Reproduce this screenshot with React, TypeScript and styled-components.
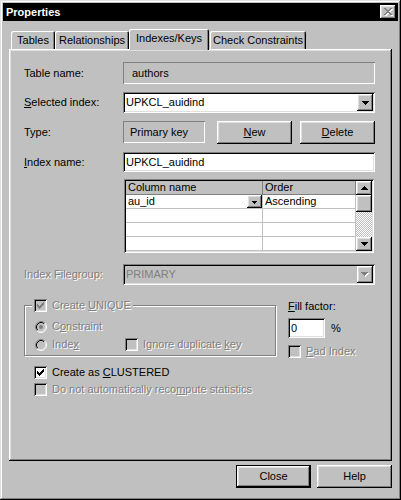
import React from "react";
import styled, { createGlobalStyle, css } from "styled-components";

const FACE = "#c0c0c0";
const LIGHT = "#dfdfdf";
const SHADOW = "#808080";

const GlobalStyle = createGlobalStyle`
  html, body { margin: 0; padding: 0; background: ${FACE}; }
  body {
    font-family: "Liberation Sans", Arial, sans-serif;
    font-size: 11px;
    line-height: 13px;
    color: #000;
  }
  *, *::before, *::after { box-sizing: border-box; }
`;

const raisedEdge = css`
  box-shadow: inset -1px -1px 0 #000, inset 1px 1px 0 #fff,
    inset -2px -2px 0 ${SHADOW}, inset 2px 2px 0 ${LIGHT};
`;
const sunkenEdge = css`
  box-shadow: inset 1px 1px 0 ${SHADOW}, inset -1px -1px 0 #fff,
    inset 2px 2px 0 #000, inset -2px -2px 0 ${LIGHT};
`;
const disabledText = css`
  color: ${SHADOW};
  text-shadow: 1px 1px 0 #fff;
`;

/* ---------- pixel glyphs ---------- */
const pix = (rows: string[]) =>
  rows
    .map((r, y) =>
      r
        .split("")
        .map((c, x) => (c === "#" ? `M${x} ${y}h1v1h-1z` : ""))
        .join("")
    )
    .join("");

const CLOSE_X = [
  "##....##",
  ".##..##.",
  "..####..",
  "...##...",
  "..####..",
  ".##..##.",
  "##....##",
];
const DOWN = ["#######", ".#####.", "..###..", "...#..."];
const DOWN_SMALL = ["#####", ".###.", "..#.."];
const UP = ["...#...", "..###..", ".#####.", "#######"];
const CHECK = [
  "......#",
  ".....##",
  "#...###",
  "##.###.",
  "#####..",
  ".###...",
  "..#....",
];

const GlyphSvg = styled.svg`
  display: block;
  flex: none;
`;

const Glyph: React.FC<{ rows: string[]; color: string; embossed?: boolean }> = ({
  rows,
  color,
  embossed,
}) => {
  const w = rows[0].length + (embossed ? 1 : 0);
  const h = rows.length + (embossed ? 1 : 0);
  const d = pix(rows);
  return (
    <GlyphSvg width={w} height={h} viewBox={`0 0 ${w} ${h}`} shapeRendering="crispEdges">
      {embossed && <path d={d} fill="#fff" transform="translate(1 1)" />}
      <path d={d} fill={color} />
    </GlyphSvg>
  );
};

/* ---------- window frame ---------- */
const Window = styled.div`
  width: 401px;
  height: 500px;
  background: ${FACE};
  padding: 3px;
  display: flex;
  flex-direction: column;
  box-shadow: inset -1px -1px 0 #000, inset 1px 1px 0 ${LIGHT},
    inset -2px -2px 0 ${SHADOW}, inset 2px 2px 0 #fff;
`;

const TitleBar = styled.div`
  height: 18px;
  flex: none;
  background: #000;
  color: #fff;
  display: flex;
  align-items: center;
  justify-content: space-between;
  padding: 0 2px 0 3px;
`;

const TitleText = styled.span`
  font-weight: bold;
  font-size: 11px;
`;

const CaptionButton = styled.div`
  width: 16px;
  height: 14px;
  background: ${FACE};
  ${raisedEdge};
  display: flex;
  align-items: center;
  justify-content: center;
  padding-left: 1px;
`;

/* ---------- tabs ---------- */
const TabStrip = styled.div`
  display: flex;
  align-items: flex-end;
  height: 20px;
  margin-top: 8px;
  padding-left: 8px;
  flex: none;
`;

const Tab = styled.div<{ $w: number; $active?: boolean; $gap?: number }>`
  width: ${(p) => p.$w}px;
  height: ${(p) => (p.$active ? 21 : 18)}px;
  margin-bottom: ${(p) => (p.$active ? -1 : 0)}px;
  margin-left: ${(p) => p.$gap ?? 0}px;
  position: relative;
  z-index: ${(p) => (p.$active ? 2 : 0)};
  background: ${FACE};
  border-radius: 2px 2px 0 0;
  box-shadow: inset 1px 1px 0 #fff, inset -1px 0 0 #000, inset -2px 0 0 ${SHADOW};
  display: flex;
  align-items: center;
  justify-content: center;
  padding-bottom: ${(p) => (p.$active ? 3 : 0)}px;
  white-space: nowrap;
`;

const Panel = styled.div`
  flex: none;
  height: 412px;
  margin: 0 6px;
  padding: 13px 17px 0 15px;
  display: flex;
  flex-direction: column;
  position: relative;
  z-index: 1;
  background: ${FACE};
  box-shadow: inset -1px -1px 0 #000, inset 1px 1px 0 #fff,
    inset -2px -2px 0 ${SHADOW}, inset 2px 2px 0 ${LIGHT};
`;

/* ---------- form rows ---------- */
const Row = styled.div<{ $mt: number; $h: number }>`
  display: flex;
  align-items: center;
  margin-top: ${(p) => p.$mt}px;
  height: ${(p) => p.$h}px;
  flex: none;
`;

const Label = styled.span<{ $disabled?: boolean }>`
  width: 99px;
  flex: none;
  white-space: nowrap;
  ${(p) => p.$disabled && disabledText};
`;

const StaticBox = styled.div<{ $w?: number; $pad: number }>`
  ${(p) => (p.$w ? `width: ${p.$w}px; flex: none;` : "flex: 1;")}
  height: 22px;
  padding-left: ${(p) => p.$pad}px;
  display: flex;
  align-items: center;
  box-shadow: inset 1px 1px 0 ${SHADOW}, inset -1px -1px 0 #fff;
`;

const Combo = styled.div<{ $disabled?: boolean }>`
  flex: 1;
  height: 21px;
  padding: 2px;
  display: flex;
  background: ${(p) => (p.$disabled ? FACE : "#fff")};
  ${sunkenEdge};
`;

const ComboText = styled.div<{ $disabled?: boolean }>`
  flex: 1;
  padding-left: 1px;
  display: flex;
  align-items: center;
  color: ${(p) => (p.$disabled ? SHADOW : "#000")};
`;

const DropButton = styled.div<{ $w?: number }>`
  width: ${(p) => p.$w ?? 16}px;
  flex: none;
  background: ${FACE};
  ${raisedEdge};
  display: flex;
  align-items: center;
  justify-content: center;
`;

const TextBox = styled.div<{ $w?: number }>`
  ${(p) => (p.$w ? `width: ${p.$w}px; flex: none;` : "flex: 1;")}
  height: 20px;
  padding-left: 3px;
  display: flex;
  align-items: center;
  background: #fff;
  ${sunkenEdge};
`;

const PushButton = styled.div<{ $w: number; $ml?: number; $default?: boolean }>`
  width: ${(p) => p.$w}px;
  height: 23px;
  margin-left: ${(p) => p.$ml ?? 0}px;
  flex: none;
  display: flex;
  align-items: center;
  justify-content: center;
  background: ${FACE};
  ${raisedEdge};
  ${(p) =>
    p.$default &&
    css`
      border: 1px solid #000;
      box-shadow: inset -1px -1px 0 #000, inset 1px 1px 0 #fff,
        inset -2px -2px 0 ${SHADOW}, inset 2px 2px 0 ${LIGHT};
    `}
`;

/* ---------- grid ---------- */
const GridFrame = styled.div`
  margin: 7px 1px 0 100px;
  height: 74px;
  padding: 2px;
  display: flex;
  background: #fff;
  flex: none;
  ${sunkenEdge};
`;

const GridTable = styled.div`
  flex: 1;
  display: grid;
  grid-template-columns: 137px 1fr;
  grid-auto-rows: 14px;
`;

const HeadCell = styled.div`
  background: ${FACE};
  border-right: 1px solid ${SHADOW};
  border-bottom: 1px solid ${SHADOW};
  padding-left: 2px;
  display: flex;
  align-items: center;
  white-space: nowrap;
`;

const Cell = styled.div`
  border-right: 1px solid ${FACE};
  border-bottom: 1px solid ${FACE};
  padding-left: 2px;
  display: flex;
  align-items: center;
  justify-content: space-between;
  white-space: nowrap;
`;

const CellDrop = styled.div`
  width: 15px;
  height: 13px;
  background: ${FACE};
  ${raisedEdge};
  display: flex;
  align-items: center;
  justify-content: center;
  padding-top: 1px;
`;

const ScrollBar = styled.div`
  width: 16px;
  flex: none;
  display: flex;
  flex-direction: column;
`;

const ScrollPart = styled.div<{ $h: number }>`
  height: ${(p) => p.$h}px;
  flex: none;
  background: ${FACE};
  ${raisedEdge};
  display: flex;
  align-items: center;
  justify-content: center;
`;

const ScrollTrack = styled.div`
  flex: 1;
  background: repeating-conic-gradient(${FACE} 0 25%, #fff 0 50%) 0 0 / 2px 2px;
`;

/* ---------- group + checks ---------- */
const Middle = styled.div`
  display: flex;
  align-items: flex-start;
  margin-top: 14px;
  height: 59px;
  flex: none;
`;

const Group = styled.fieldset`
  width: 252px;
  margin: 0;
  min-width: 0;
  padding: 8px 0 4px 10px;
  border: 1px solid ${SHADOW};
  box-shadow: 1px 1px 0 #fff, inset 1px 1px 0 #fff;
  display: flex;
  flex-direction: column;
  gap: 5px;
`;

const Legend = styled.legend`
  margin-left: -3px;
  padding: 0 2px;
  background: ${FACE};
  display: flex;
  align-items: center;
  gap: 5px;
  height: 13px;
  ${disabledText};
`;

const Option = styled.div<{ $disabled?: boolean; $w?: number; $pl?: number }>`
  display: flex;
  align-items: center;
  gap: 5px;
  height: 13px;
  flex: none;
  white-space: nowrap;
  ${(p) => p.$w && `width: ${p.$w}px;`}
  ${(p) => p.$pl && `padding-left: ${p.$pl}px;`}
  ${(p) => p.$disabled && disabledText};
`;

const OptionLine = styled.div`
  display: flex;
  align-items: center;
`;

const Box = styled.div<{ $disabled?: boolean }>`
  width: 13px;
  height: 13px;
  flex: none;
  background: ${(p) => (p.$disabled ? FACE : "#fff")};
  ${sunkenEdge};
  display: flex;
  align-items: center;
  justify-content: center;
  text-shadow: none;
`;

const CheckBox: React.FC<{ checked?: boolean; disabled?: boolean }> = ({ checked, disabled }) => (
  <Box $disabled={disabled}>{checked && <Glyph rows={CHECK} color={disabled ? SHADOW : "#000"} />}</Box>
);

const RadioSvg = styled.svg`
  display: block;
  flex: none;
`;

const Radio: React.FC<{ checked?: boolean; disabled?: boolean }> = ({ checked, disabled }) => (
  <RadioSvg width={12} height={12} viewBox="0 0 12 12">
    <circle cx={6} cy={6} r={4.5} fill={disabled ? FACE : "#fff"} />
    <path d="M2.11 9.89 A5.5 5.5 0 0 1 9.89 2.11" stroke={SHADOW} fill="none" />
    <path d="M9.89 2.11 A5.5 5.5 0 0 1 2.11 9.89" stroke="#fff" fill="none" />
    <path d="M2.82 9.18 A4.5 4.5 0 0 1 9.18 2.82" stroke="#000" fill="none" />
    <path d="M9.18 2.82 A4.5 4.5 0 0 1 2.82 9.18" stroke={LIGHT} fill="none" />
    {checked && <circle cx={6} cy={6} r={2} fill={disabled ? SHADOW : "#000"} />}
  </RadioSvg>
);

const FillColumn = styled.div`
  margin-left: 12px;
  display: flex;
  flex-direction: column;
  padding-top: 1px;
`;

const FillRow = styled.div`
  display: flex;
  align-items: center;
  margin-top: 5px;
`;

const Percent = styled.span`
  margin-left: 6px;
`;

const PadRow = styled(Option)`
  margin-top: 7px;
`;

const CheckRow = styled(Option)<{ $mt: number }>`
  margin-top: ${(p) => p.$mt}px;
  padding-left: 10px;
`;

/* ---------- footer ---------- */
const Footer = styled.div`
  display: flex;
  justify-content: flex-end;
  gap: 6px;
  margin: 4px 6px 0;
`;

export default function App() {
  return (
    <>
      <GlobalStyle />
      <Window>
        <TitleBar>
          <TitleText>Properties</TitleText>
          <CaptionButton>
            <Glyph rows={CLOSE_X} color={SHADOW} embossed />
          </CaptionButton>
        </TitleBar>

        <TabStrip>
          <Tab $w={44}>Tables</Tab>
          <Tab $w={74}>Relationships</Tab>
          <Tab $w={80} $active>
            Indexes/Keys
          </Tab>
          <Tab $w={96} $gap={1}>
            Check Constraints
          </Tab>
        </TabStrip>

        <Panel>
          <Row $mt={0} $h={22}>
            <Label>Table name:</Label>
            <StaticBox $pad={9}>authors</StaticBox>
          </Row>

          <Row $mt={8} $h={21}>
            <Label>
              <u>S</u>elected index:
            </Label>
            <Combo>
              <ComboText>UPKCL_auidind</ComboText>
              <DropButton>
                <Glyph rows={DOWN} color="#000" />
              </DropButton>
            </Combo>
          </Row>

          <Row $mt={7} $h={24}>
            <Label>Type:</Label>
            <StaticBox $w={82} $pad={7}>
              Primary key
            </StaticBox>
            <PushButton $w={75} $ml={12}>
              <span>
                <u>N</u>ew
              </span>
            </PushButton>
            <PushButton $w={75} $ml={8}>
              <span>
                <u>D</u>elete
              </span>
            </PushButton>
          </Row>

          <Row $mt={8} $h={20}>
            <Label>
              <u>I</u>ndex name:
            </Label>
            <TextBox>UPKCL_auidind</TextBox>
          </Row>

          <GridFrame>
            <GridTable>
              <HeadCell>Column name</HeadCell>
              <HeadCell>Order</HeadCell>
              <Cell>
                au_id
                <CellDrop>
                  <Glyph rows={DOWN_SMALL} color="#000" />
                </CellDrop>
              </Cell>
              <Cell>Ascending</Cell>
              <Cell />
              <Cell />
              <Cell />
              <Cell />
              <Cell />
              <Cell />
            </GridTable>
            <ScrollBar>
              <ScrollPart $h={14}>
                <Glyph rows={UP} color="#000" />
              </ScrollPart>
              <ScrollPart $h={17} />
              <ScrollTrack />
              <ScrollPart $h={14}>
                <Glyph rows={DOWN} color="#000" />
              </ScrollPart>
            </ScrollBar>
          </GridFrame>

          <Row $mt={11} $h={21}>
            <Label $disabled>Index Filegroup:</Label>
            <Combo $disabled>
              <ComboText $disabled>PRIMARY</ComboText>
              <DropButton>
                <Glyph rows={DOWN} color={SHADOW} embossed />
              </DropButton>
            </Combo>
          </Row>

          <Middle>
            <Group>
              <Legend>
                <CheckBox checked disabled />
                <span>
                  Create <u>U</u>NIQUE
                </span>
              </Legend>
              <Option $disabled>
                <Radio checked disabled />
                <span>
                  C<u>o</u>nstraint
                </span>
              </Option>
              <OptionLine>
                <Option $disabled $w={90}>
                  <Radio disabled />
                  <span>
                    Inde<u>x</u>
                  </span>
                </Option>
                <Option $disabled>
                  <CheckBox disabled />
                  <span>
                    Ignore duplicate <u>k</u>ey
                  </span>
                </Option>
              </OptionLine>
            </Group>

            <FillColumn>
              <span>
                <u>F</u>ill factor:
              </span>
              <FillRow>
                <TextBox $w={37}>0</TextBox>
                <Percent>%</Percent>
              </FillRow>
              <PadRow $disabled>
                <CheckBox disabled />
                <span>
                  <u>P</u>ad Index
                </span>
              </PadRow>
            </FillColumn>
          </Middle>

          <CheckRow $mt={8}>
            <CheckBox checked />
            <span>
              Create as <u>C</u>LUSTERED
            </span>
          </CheckRow>
          <CheckRow $mt={4} $disabled>
            <CheckBox disabled />
            <span>
              Do not automatically reco<u>m</u>pute statistics
            </span>
          </CheckRow>
        </Panel>

        <Footer>
          <PushButton $w={75} $default>
            Close
          </PushButton>
          <PushButton $w={75}>Help</PushButton>
        </Footer>
      </Window>
    </>
  );
}
